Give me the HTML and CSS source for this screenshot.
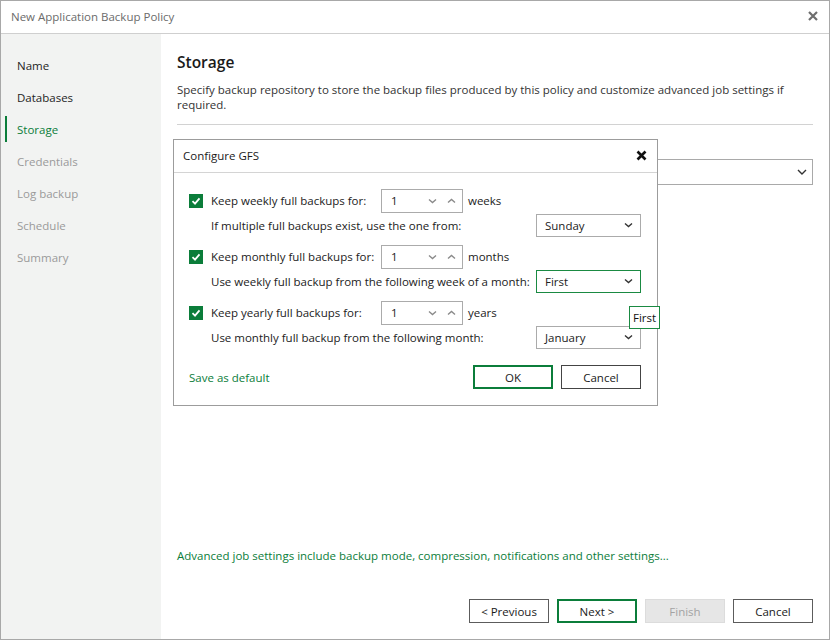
FILE: index.html
```html
<!DOCTYPE html>
<html>
<head>
<meta charset="utf-8">
<link rel="stylesheet" href="styles.css">
</head>
<body>
<div class="window">
  <div class="titlebar">
    <span class="title">New Application Backup Policy</span>
    <svg class="win-close" width="10" height="10" viewBox="0 0 10 10"><path d="M1 1L9 9M9 1L1 9" stroke="#6e6e6e" stroke-width="2.2" fill="none"/></svg>
  </div>
  <div class="body">
    <nav class="sidebar">
      <div class="step">Name</div>
      <div class="step">Databases</div>
      <div class="step active">Storage</div>
      <div class="step disabled">Credentials</div>
      <div class="step disabled">Log backup</div>
      <div class="step disabled">Schedule</div>
      <div class="step disabled">Summary</div>
    </nav>
    <main class="main">
      <h1 class="heading">Storage</h1>
      <p class="desc">Specify backup repository to store the backup files produced by this policy and customize advanced job settings if required.</p>
      <div class="rule"></div>
      <div class="repo-select">
        <span class="repo-value"></span>
        <svg class="chev dark" width="10" height="6" viewBox="0 0 10 6"><path d="M1 1L5 5L9 1" stroke="#333" stroke-width="1.4" fill="none"/></svg>
      </div>
      <div class="spacer"></div>
      <a class="link adv">Advanced job settings include backup mode, compression, notifications and other settings...</a>
      <div class="buttons">
        <button class="btn">&lt; Previous</button>
        <button class="btn primary">Next &gt;</button>
        <button class="btn disabled">Finish</button>
        <button class="btn">Cancel</button>
      </div>
    </main>
  </div>

  <div class="dialog">
    <div class="dlg-head">
      <span class="dlg-title">Configure GFS</span>
      <svg class="dlg-close" width="11" height="11" viewBox="0 0 11 11"><path d="M1.5 1.5L9.5 9.5M9.5 1.5L1.5 9.5" stroke="#111" stroke-width="2.6" fill="none"/></svg>
    </div>
    <div class="dlg-body">
      <div class="group">
        <div class="row">
          <span class="check"><svg width="14" height="14" viewBox="0 0 14 14"><path d="M3.5 7.2L6 9.6L10.5 4.4" stroke="#fff" stroke-width="1.8" fill="none"/></svg></span>
          <span class="label">Keep weekly full backups for:</span>
          <div class="spin"><span class="spin-val">1</span>
            <svg class="arr" width="9" height="6" viewBox="0 0 9 6"><path d="M1 1.5L4.5 4.5L8 1.5" stroke="#8a8a8a" stroke-width="1.4" fill="none"/></svg>
            <svg class="arr" width="9" height="6" viewBox="0 0 9 6"><path d="M1 4.5L4.5 1.5L8 4.5" stroke="#8a8a8a" stroke-width="1.4" fill="none"/></svg>
          </div>
          <span class="unit">weeks</span>
        </div>
        <div class="subrow">
          <span>If multiple full backups exist, use the one from:</span>
          <div class="select"><span>Sunday</span><svg width="9" height="6" viewBox="0 0 9 6"><path d="M1 1.5L4.5 4.5L8 1.5" stroke="#333" stroke-width="1.4" fill="none"/></svg></div>
        </div>
      </div>
      <div class="group">
        <div class="row">
          <span class="check"><svg width="14" height="14" viewBox="0 0 14 14"><path d="M3.5 7.2L6 9.6L10.5 4.4" stroke="#fff" stroke-width="1.8" fill="none"/></svg></span>
          <span class="label">Keep monthly full backups for:</span>
          <div class="spin"><span class="spin-val">1</span>
            <svg class="arr" width="9" height="6" viewBox="0 0 9 6"><path d="M1 1.5L4.5 4.5L8 1.5" stroke="#8a8a8a" stroke-width="1.4" fill="none"/></svg>
            <svg class="arr" width="9" height="6" viewBox="0 0 9 6"><path d="M1 4.5L4.5 1.5L8 4.5" stroke="#8a8a8a" stroke-width="1.4" fill="none"/></svg>
          </div>
          <span class="unit">months</span>
        </div>
        <div class="subrow">
          <span>Use weekly full backup from the following week of a month:</span>
          <div class="select focused"><span>First</span><svg width="9" height="6" viewBox="0 0 9 6"><path d="M1 1.5L4.5 4.5L8 1.5" stroke="#333" stroke-width="1.4" fill="none"/></svg></div>
        </div>
      </div>
      <div class="group">
        <div class="row">
          <span class="check"><svg width="14" height="14" viewBox="0 0 14 14"><path d="M3.5 7.2L6 9.6L10.5 4.4" stroke="#fff" stroke-width="1.8" fill="none"/></svg></span>
          <span class="label">Keep yearly full backups for:</span>
          <div class="spin"><span class="spin-val">1</span>
            <svg class="arr" width="9" height="6" viewBox="0 0 9 6"><path d="M1 1.5L4.5 4.5L8 1.5" stroke="#8a8a8a" stroke-width="1.4" fill="none"/></svg>
            <svg class="arr" width="9" height="6" viewBox="0 0 9 6"><path d="M1 4.5L4.5 1.5L8 4.5" stroke="#8a8a8a" stroke-width="1.4" fill="none"/></svg>
          </div>
          <span class="unit">years</span>
        </div>
        <div class="subrow">
          <span>Use monthly full backup from the following month:</span>
          <div class="select"><span>January</span><svg width="9" height="6" viewBox="0 0 9 6"><path d="M1 1.5L4.5 4.5L8 1.5" stroke="#333" stroke-width="1.4" fill="none"/></svg></div>
        </div>
      </div>
    </div>
    <div class="dlg-foot">
      <a class="link">Save as default</a>
      <div class="dlg-buttons">
        <button class="btn primary">OK</button>
        <button class="btn dark">Cancel</button>
      </div>
    </div>
  </div>

  <div class="tooltip">First</div>
</div>
</body>
</html>
```

FILE: styles.css
```css
* { box-sizing: border-box; }
html, body { margin: 0; padding: 0; background: #fff; }
body {
  font-family: "Open Sans", "Noto Sans", sans-serif;
  font-size: 11.5px;
  color: #222;
}
.window {
  position: relative;
  width: 830px;
  height: 640px;
  border: 1px solid #a8a8a8;
  display: flex;
  flex-direction: column;
  background: #fff;
}
.titlebar {
  height: 33px;
  border-bottom: 1px solid #cfcfcf;
  display: flex;
  align-items: center;
  justify-content: space-between;
  padding: 0 11px 2px 10px;
  flex: none;
}
.title { color: #6b6b6b; font-size: 11.5px; }
.win-close { display: block; }
.body { flex: 1; display: flex; min-height: 0; }
.sidebar {
  width: 160px;
  flex: none;
  background: #f2f3f2;
  padding-top: 18px;
  display: flex;
  flex-direction: column;
  gap: 6px;
}
.step {
  height: 26px;
  margin-left: 4px;
  border-left: 2px solid transparent;
  padding-left: 10px;
  display: flex;
  align-items: center;
  color: #1e1e1e;
}
.step.active { border-left-color: #0b7d3a; color: #0b7d3a; }
.step.disabled { color: #9a9a9a; }
.main {
  flex: 1;
  display: flex;
  flex-direction: column;
  padding: 17px 16px 16px 16px;
}
.heading {
  margin: 0;
  font-size: 15.5px;
  font-weight: 600;
  line-height: 22px;
  color: #1a1a1a;
}
.desc {
  margin: 9px 0 0 0;
  line-height: 15px;
  color: #333;
  padding-right: 24px;
}
.rule { height: 1px; background: #d2d2d2; margin-top: 12px; }
.repo-select {
  margin-top: 34px;
  height: 26px;
  border: 1px solid #a9a9a9;
  display: flex;
  align-items: center;
  justify-content: flex-end;
  padding-right: 5px;
}
.spacer { flex: 1; }
.link { color: #0b7d3a; text-decoration: none; cursor: pointer; }
.adv { line-height: 16px; margin-bottom: 35px; }
.buttons { display: flex; justify-content: flex-end; gap: 8px; }
.btn {
  width: 80px;
  height: 24px;
  background: #fff;
  border: 1px solid #5c5c5c;
  font-family: inherit;
  font-size: 11.5px;
  color: #1a1a1a;
  padding: 0;
}
.btn.primary { border: 2px solid #0b7d3a; }
.btn.disabled { background: #e6e6e6; border-color: #dcdcdc; color: #a3a3a3; }
.btn.dark { border-color: #444; }

.dialog {
  position: absolute;
  left: 172px;
  top: 138px;
  width: 485px;
  height: 267px;
  background: #fff;
  border: 1px solid #9c9c9c;
  display: flex;
  flex-direction: column;
}
.dlg-head {
  height: 33px;
  border-bottom: 1px solid #d4d4d4;
  display: flex;
  align-items: center;
  justify-content: space-between;
  padding: 0 10px 1px 9px;
  flex: none;
}
.dlg-title { color: #1a1a1a; }
.dlg-close { display: block; }
.dlg-body { padding: 16px 16px 0 15px; display: flex; flex-direction: column; gap: 8px; }
.row { height: 24px; display: flex; align-items: center; padding-bottom: 1px; }
.check {
  width: 14px; height: 14px;
  background: #0b7d3a;
  display: block;
  margin-right: 8px;
  flex: none;
}
.check svg { display: block; }
.label { width: 170px; flex: none; }
.spin {
  width: 82px; height: 24px;
  border: 1px solid #ababab;
  display: flex; align-items: center;
  padding-left: 9px;
  padding-right: 6px;
}
.spin-val { flex: 1; }
.spin .arr { display: block; margin-left: 10px; }
.unit { margin-left: 5px; }
.subrow {
  height: 24px;
  display: flex;
  align-items: center;
  justify-content: space-between;
  padding-left: 22px;
}
.select {
  width: 105px; height: 23px;
  border: 1px solid #ababab;
  display: flex; align-items: center; justify-content: space-between;
  padding: 0 7px 0 8px;
}
.select svg { display: block; }
.select.focused { border-color: #1a8a42; }
.dlg-foot {
  display: flex;
  align-items: center;
  justify-content: space-between;
  padding: 16px 16px 0 15px;
}
.dlg-buttons { display: flex; gap: 8px; }
.dlg-buttons .btn { width: 80px; }
.tooltip {
  position: absolute;
  left: 628px;
  top: 305px;
  height: 23px;
  padding: 0 3px;
  border: 1px solid #1a8a42;
  background: #fff;
  display: flex;
  align-items: center;
  color: #111;
}
```
